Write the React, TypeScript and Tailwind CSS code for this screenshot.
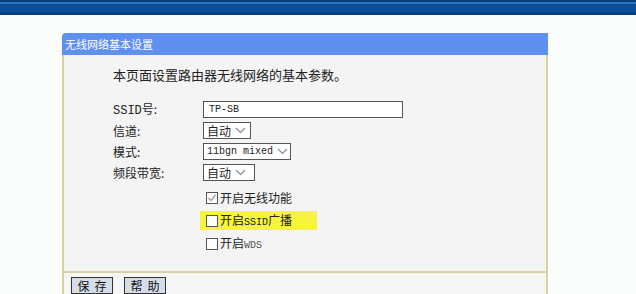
import React from "react";

const cjk = "font-['Noto_Sans_CJK_SC','Liberation_Sans',sans-serif]";
const mono = "font-['Liberation_Mono','Noto_Sans_CJK_SC',monospace]";

const Chevron = () => (
  <svg width="11" height="7" viewBox="0 0 11 7" className="ml-1">
    <path d="M1 1 L5.5 5.5 L10 1" fill="none" stroke="#8a8a8a" strokeWidth="1.2" />
  </svg>
);

const Select = ({ value, width, latin }: { value: string; width: string; latin?: boolean }) => (
  <div
    className={`flex items-center h-[17px] border border-[#555] bg-white pl-[3px] text-[#222] ${width} ${
      latin ? `${mono} text-[10px]` : `${cjk} text-[12px]`
    }`}
  >
    <span className="leading-none">{value}</span>
    <Chevron />
  </div>
);

const Check = ({ checked, label, highlight }: { checked?: boolean; label: React.ReactNode; highlight?: boolean }) => (
  <div className={`flex items-center h-[19px] w-[117px] -ml-[6px] pl-[6px] ${highlight ? "bg-[#f6f43c]" : ""}`}>
    <span className="w-[12px] h-[12px] border border-[#555] bg-white flex items-center justify-center">
      {checked && (
        <svg width="10" height="10" viewBox="0 0 10 10">
          <path d="M1.5 5 L4 7.5 L8.5 2" fill="none" stroke="#9a9a9a" strokeWidth="1.3" />
        </svg>
      )}
    </span>
    <span className={`ml-[2px] text-[12px] text-[#222] leading-none ${cjk}`}>{label}</span>
  </div>
);

export default function App() {
  return (
    <div className="w-[636px] h-[294px] bg-[#fbfdfd] overflow-hidden">
      <div className="h-[15px] bg-[#0c4f99] border-t-[2px] border-[#0a3d78] shadow-[inset_0_2px_0_#2a72c0,inset_0_-3px_0_#0a3f7e]" />
      <div className="ml-[62px] mt-[18px] w-[486px]">
        <div className={`h-[22px] bg-[#5f8fef] rounded-tl-[4px] text-white text-[11px] flex items-center pl-[3px] ${cjk}`}>
          无线网络基本设置
        </div>
        <div className="h-[216px] bg-[#f4f4f4] border-l-2 border-r-2 border-[#d8d1a3] pl-[49px] pt-[11px]">
          <div className={`text-[13px] text-[#222] h-[18px] leading-[18px] ${cjk}`}>
            本页面设置路由器无线网络的基本参数。
          </div>
          <div
            className={`grid grid-cols-[90px_1fr] auto-rows-[17px] mt-[17px] text-[12px] leading-[17px] text-[#222] items-center gap-y-[4px] ${cjk}`}
          >
            <span>
              <span className={mono}>SSID</span>号:
            </span>
            <div className={`h-[17px] w-[200px] border border-[#555] bg-white pl-[5px] text-[10px] leading-[15px] ${mono}`}>
              TP-SB
            </div>
            <span>信道:</span>
            <Select value="自动" width="w-[48px]" />
            <span>模式:</span>
            <Select value="11bgn mixed" width="w-[88px]" latin />
            <span>频段带宽:</span>
            <Select value="自动" width="w-[52px]" />
          </div>
          <div className="ml-[93px] mt-[7px] flex flex-col gap-[4px]">
            <Check checked label="开启无线功能" />
            <Check
              highlight
              label={
                <>
                  开启<span className={`${mono} text-[10px]`}>SSID</span>广播
                </>
              }
            />
            <Check
              label={
                <>
                  开启<span className={`${mono} text-[10px] text-[#555]`}>WDS</span>
                </>
              }
            />
          </div>
        </div>
        <div className="h-[2px] bg-[#d8d1a3]" />
        <div className="h-[30px] bg-[#f6f6f6] border-l-2 border-r-2 border-[#d8d1a3] flex items-start pt-[4px] pl-[7px] gap-[11px]">
          <button
            className={`h-[17px] w-[42px] border border-[#333] bg-[#d5dde8] text-[12px] text-[#111] leading-[15px] tracking-[5px] pl-[5px] ${cjk}`}
          >
            保存
          </button>
          <button
            className={`h-[17px] w-[42px] border border-[#333] bg-[#d5dde8] text-[12px] text-[#111] leading-[15px] tracking-[5px] pl-[5px] ${cjk}`}
          >
            帮助
          </button>
        </div>
      </div>
    </div>
  );
}
